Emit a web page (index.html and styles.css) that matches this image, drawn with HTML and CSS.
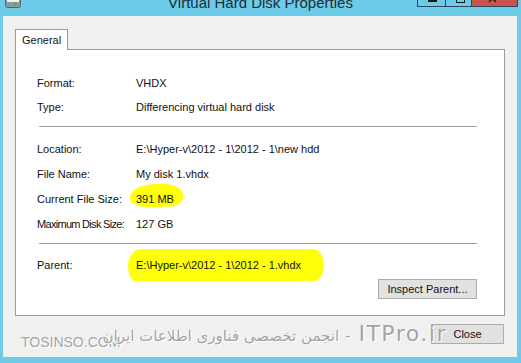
FILE: index.html
```html
<!DOCTYPE html>
<html lang="en">

<head>
    <meta charset="UTF-8" />
    <meta name="viewport" content="width=device-width, initial-scale=1.0" />
    <title>Virtual Hard Disk Properties</title>
    <link rel="stylesheet" href="styles.css">
</head>

<body>
    <div class="window">
        <!-- Title Bar -->
        <div class="titlebar">
            <svg class="app-icon" width="16" height="8" viewBox="0 0 16 8">
                <rect x="0.5" y="-3" width="15" height="10.5" rx="2" fill="#8c9aa0" stroke="#55656c" />
                <rect x="2" y="-2" width="12" height="4" fill="#eef2f3" />
                <rect x="9" y="3" width="3" height="2" fill="#39b54a" />
            </svg>
            <div class="title">Virtual Hard Disk Properties</div>
            <div class="caption-btns">
                <span class="cap-btn min"><i></i></span>
                <span class="cap-btn max"><i></i></span>
                <span class="cap-btn close">
                    <svg width="44" height="7" viewBox="0 0 44 7">
                        <path d="M17 -4 L24 3 M24 -4 L17 3" stroke="#3c1a17" stroke-width="1.6" />
                    </svg>
                </span>
            </div>
        </div>

        <!-- Client Area -->
        <div class="client">
            <div class="tabs">
                <div class="tab">General</div>
            </div>

            <div class="tab-panel">
                <div class="group first">
                    <div class="row"><span class="label">Format:</span><span>VHDX</span></div>
                    <div class="row"><span class="label">Type:</span><span>Differencing virtual hard disk</span></div>
                </div>

                <hr class="sep">

                <div class="group">
                    <div class="row"><span class="label">Location:</span><span>E:\Hyper-v\2012 - 1\2012 - 1\new hdd</span></div>
                    <div class="row"><span class="label">File Name:</span><span>My disk 1.vhdx</span></div>
                    <div class="row"><span class="label">Current File Size:</span><span><span class="mark mark-size">391 MB</span></span></div>
                    <div class="row"><span class="label tight">Maximum Disk Size:</span><span>127 GB</span></div>
                </div>

                <hr class="sep">

                <div class="group">
                    <div class="row"><span class="label">Parent:</span><span><span class="mark mark-parent">E:\Hyper-v\2012 - 1\2012 - 1.vhdx</span></span></div>
                </div>

                <div class="panel-actions">
                    <button class="btn inspect-btn">Inspect Parent...</button>
                </div>
            </div>

            <div class="footer">
                <button class="btn close-btn">Close</button>
            </div>

            <!-- Watermark -->
            <span class="wm-site">TOSINSO.COM</span>
            <div class="watermark">
                <span class="wm-latin">ITPro.ir</span>
                <span class="wm-dash">-</span>
                <span class="wm-fa">انجمن تخصصی فناوری اطلاعات ایران</span>
            </div>
        </div>
    </div>
</body>

</html>
```

FILE: styles.css
```css
body {
    font-family: "Liberation Sans", Arial, sans-serif;
    font-size: 11px;
    color: #111;
    background-color: #6ccbe8;
    margin: 0;
    padding: 0;
    width: 521px;
    height: 363px;
    overflow: hidden;
}

/* Title bar */
.titlebar {
    display: grid;
    grid-template-columns: 1fr auto 1fr;
    align-items: start;
    height: 16px;
    overflow: hidden;
}

.app-icon {
    display: block;
    margin-left: 5px;
}

.title {
    font-size: 15px;
    line-height: 15px;
    margin-top: -5px;
    color: #1d2c35;
    white-space: nowrap;
}

.caption-btns {
    justify-self: end;
    display: flex;
    margin-right: 3px;
    margin-top: -1px;
}

.cap-btn {
    display: block;
    height: 7px;
    border: 1px solid #2c4756;
    border-top: none;
    position: relative;
    overflow: hidden;
}

.cap-btn.min {
    width: 27px;
}

.cap-btn.max {
    width: 25px;
    border-left: none;
}

.cap-btn.close {
    width: 45px;
    border-left: none;
    background-color: #c8544d;
}

.cap-btn.close svg {
    display: block;
}

.cap-btn i {
    display: block;
}

.cap-btn.min i {
    width: 9px;
    height: 2px;
    margin: 1px 0 0 10px;
    background: #111;
}

.cap-btn.max i {
    width: 7px;
    height: 4px;
    margin: -1px 0 0 10px;
    border: 1px solid #111;
    border-top: none;
}

/* Client area */
.client {
    position: relative;
    height: 341px;
    margin: 0 4px 0 3px;
    padding: 13px 12px 0 12px;
    background-color: #f0f0f0;
    box-sizing: border-box;
    overflow: hidden;
}

.tabs {
    display: flex;
}

.tab {
    position: relative;
    z-index: 1;
    width: 53px;
    height: 21px;
    margin-bottom: -1px;
    padding-left: 6px;
    line-height: 20px;
    border: 1px solid #9d9d9d;
    border-bottom: none;
    background-color: #fff;
    box-sizing: border-box;
}

.tab-panel {
    border: 1px solid #9d9d9d;
    background-color: #fff;
    padding: 21px 27px 16px 21px;
}

.group.first .row {
    height: 24px;
}

.row {
    display: grid;
    grid-template-columns: 99px 1fr;
    align-items: center;
    height: 25px;
    white-space: nowrap;
}

.label.tight {
    letter-spacing: -0.7px;
}

.sep {
    border: none;
    border-top: 1px solid #a0a0a0;
    height: 0;
    margin: 7px 0 9px 2px;
}

.sep + .group .row:only-child {
    margin-top: -1px;
}

.panel-actions {
    display: flex;
    justify-content: flex-end;
    margin-top: 2px;
}

.btn {
    font-family: "Liberation Sans", Arial, sans-serif;
    font-size: 11px;
    color: #111;
    height: 20px;
    padding: 0;
    border: 1px solid #adadad;
    background-color: #e1e1e1;
    border-radius: 0;
}

.inspect-btn {
    width: 99px;
}

.footer {
    display: flex;
    justify-content: flex-end;
    margin-top: 8px;
}

.close-btn {
    width: 73px;
    margin-right: 1px;
}

/* Marker highlights */
.mark {
    position: relative;
    z-index: 0;
}

.mark::before {
    content: "";
    position: absolute;
    z-index: -1;
    background-color: #ffff0a;
}

.mark-size::before {
    top: -9px;
    bottom: -2px;
    left: -6px;
    right: -9px;
    border-radius: 45% 40% 25% 35% / 60% 55% 40% 45%;
    transform: rotate(-2deg);
}

.mark-parent::before {
    top: -10px;
    bottom: -10px;
    left: -8px;
    right: -22px;
    border-radius: 14px 12px 10px 8px / 18px 12px 12px 16px;
}

/* Watermark */
.wm-site,
.watermark {
    position: absolute;
    color: #a3a3a3;
    text-shadow: 1px 1px 0 #fff, -1px 0 0 #fafafa;
    white-space: nowrap;
}

.wm-site {
    left: 18px;
    top: 319px;
    font-size: 14px;
    line-height: 14px;
}

.watermark {
    right: 70px;
    top: 305px;
    direction: rtl;
    display: flex;
    align-items: baseline;
    gap: 6px;
}

.wm-latin {
    font-family: "DejaVu Sans", sans-serif;
    font-size: 22px;
    letter-spacing: 1.5px;
    margin-left: 2px;
}

.wm-dash {
    font-size: 16px;
}

.wm-fa {
    font-family: "DejaVu Sans", sans-serif;
    font-size: 15px;
}
```
